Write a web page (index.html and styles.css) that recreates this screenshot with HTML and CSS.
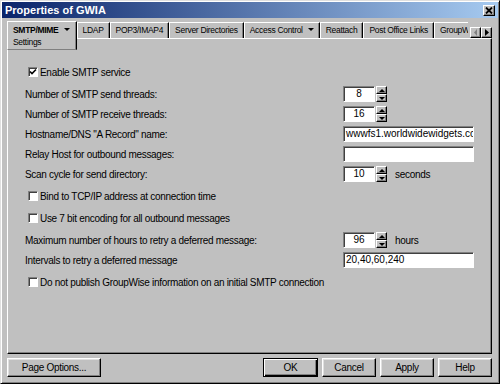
FILE: index.html
```html
<!DOCTYPE html>
<html lang="en">
<head>
    <meta charset="UTF-8">
    <title>Properties of GWIA</title>
    <link rel="stylesheet" href="styles.css">
</head>
<body>
    <div class="window">
        <div class="titlebar">
            <span class="title">Properties of GWIA</span>
            <span class="close-btn">
                <svg width="8" height="7" viewBox="0 0 8 7"><path d="M1 0.5 L7 6.5 M7 0.5 L1 6.5" stroke="#000" stroke-width="1.8"/></svg>
            </span>
        </div>

        <div class="body">
            <div class="tab-strip">
                <div class="tabs">
                    <div class="tab active">
                        <div class="tab-main">SMTP/MIME <span class="caret"></span></div>
                        <div class="tab-sub">Settings</div>
                    </div>
                    <div class="tab">LDAP</div>
                    <div class="tab">POP3/IMAP4</div>
                    <div class="tab">Server Directories</div>
                    <div class="tab">Access Control <span class="caret"></span></div>
                    <div class="tab">Reattach</div>
                    <div class="tab">Post Office Links</div>
                    <div class="tab">GroupWise</div>
                </div>
                <div class="tab-scroll">
                    <span class="scroll-btn">
                        <svg width="4" height="7" viewBox="0 0 4 7"><path d="M3 0 L0 3.5 L3 7 Z" fill="#808080"/></svg>
                    </span>
                    <span class="scroll-btn">
                        <svg width="4" height="7" viewBox="0 0 4 7"><path d="M0 0 L4 3.5 L0 7 Z" fill="#000"/></svg>
                    </span>
                </div>
            </div>

            <div class="panel">
                <div class="row check">
                    <span class="checkbox">
                        <svg width="8" height="8" viewBox="0 0 8 8"><path d="M1 3.5 L3 5.5 L7 1.5" fill="none" stroke="#000" stroke-width="1.6"/></svg>
                    </span>
                    <span class="check-label">Enable SMTP service</span>
                </div>
                <div class="row">
                    <span class="label">Number of SMTP send threads:</span>
                    <span class="input spin">8</span>
                    <span class="spin-btns">
                        <span class="spin-btn"><span class="arrow-up"></span></span>
                        <span class="spin-btn"><span class="arrow-down"></span></span>
                    </span>
                </div>
                <div class="row">
                    <span class="label">Number of SMTP receive threads:</span>
                    <span class="input spin">16</span>
                    <span class="spin-btns">
                        <span class="spin-btn"><span class="arrow-up"></span></span>
                        <span class="spin-btn"><span class="arrow-down"></span></span>
                    </span>
                </div>
                <div class="row">
                    <span class="label">Hostname/DNS "A Record" name:</span>
                    <span class="input wide">wwwfs1.worldwidewidgets.com</span>
                </div>
                <div class="row">
                    <span class="label">Relay Host for outbound messages:</span>
                    <span class="input wide"></span>
                </div>
                <div class="row">
                    <span class="label">Scan cycle for send directory:</span>
                    <span class="input spin">10</span>
                    <span class="spin-btns">
                        <span class="spin-btn"><span class="arrow-up"></span></span>
                        <span class="spin-btn"><span class="arrow-down"></span></span>
                    </span>
                    <span class="unit">seconds</span>
                </div>
                <div class="row check">
                    <span class="checkbox"></span>
                    <span class="check-label">Bind to TCP/IP address at connection time</span>
                </div>
                <div class="row check">
                    <span class="checkbox"></span>
                    <span class="check-label">Use 7 bit encoding for all outbound messages</span>
                </div>
                <div class="row">
                    <span class="label">Maximum number of hours to retry a deferred message:</span>
                    <span class="input spin">96</span>
                    <span class="spin-btns">
                        <span class="spin-btn"><span class="arrow-up"></span></span>
                        <span class="spin-btn"><span class="arrow-down"></span></span>
                    </span>
                    <span class="unit">hours</span>
                </div>
                <div class="row">
                    <span class="label">Intervals to retry a deferred message</span>
                    <span class="input wide">20,40,60,240</span>
                </div>
                <div class="row check">
                    <span class="checkbox"></span>
                    <span class="check-label">Do not publish GroupWise information on an initial SMTP connection</span>
                </div>
            </div>

            <div class="footer">
                <button class="btn page-options">Page Options...</button>
                <div class="btn-group">
                    <button class="btn default">OK</button>
                    <button class="btn">Cancel</button>
                    <button class="btn">Apply</button>
                    <button class="btn">Help</button>
                </div>
            </div>
        </div>
    </div>
</body>
</html>
```

FILE: styles.css
```css
/* Reset */
* {
    margin: 0;
    padding: 0;
    box-sizing: border-box;
}

body {
    font-family: 'Liberation Sans', Arial, sans-serif;
    font-size: 10px;
    letter-spacing: -0.3px;
    color: #000;
    background-color: #c0c0c0;
}

/* Window frame */
.window {
    width: 500px;
    height: 384px;
    background-color: #c0c0c0;
    border: 1px solid;
    border-color: #dfdfdf #000 #000 #dfdfdf;
    box-shadow: inset 1px 1px #fff, inset -1px -1px #808080;
    padding: 1px;
    display: flex;
    flex-direction: column;
}

.titlebar {
    height: 16px;
    flex: none;
    background: linear-gradient(to right, #0a246a, #a6caf0);
    display: flex;
    align-items: center;
    justify-content: space-between;
    padding: 0 3px;
}

.title {
    color: #fff;
    font-weight: bold;
    font-size: 11px;
    letter-spacing: 0;
}

.close-btn {
    width: 12px;
    height: 11px;
    background-color: #c0c0c0;
    border: 1px solid;
    border-color: #fff #000 #000 #fff;
    box-shadow: inset -1px -1px #808080;
    display: flex;
    align-items: center;
    justify-content: center;
}

.body {
    flex: 1;
    display: flex;
    flex-direction: column;
    padding: 3px 6px 0 5px;
}

/* Tabs */
.tab-strip {
    height: 17px;
    flex: none;
    display: flex;
    align-items: flex-start;
}

.tabs {
    width: 461px;
    display: flex;
    align-items: flex-start;
    overflow-x: clip;
    overflow-y: visible;
}

.tab {
    flex: none;
    height: 16px;
    margin-top: 1px;
    padding: 0 5px;
    border-left: 1px solid #fff;
    border-top: 1px solid #fff;
    border-right: 1px solid #000;
    box-shadow: inset -1px 0 #808080;
    font-size: 8.5px;
    letter-spacing: -0.3px;
    line-height: 14px;
    white-space: nowrap;
}

.tab.active {
    position: relative;
    z-index: 1;
    height: 29px;
    margin-top: 0;
    padding: 2px 6px 0 5px;
    background-color: #c0c0c0;
    border-bottom: 1px solid #808080;
    line-height: 12px;
}

.tab-main {
    font-weight: bold;
}

.caret {
    display: inline-block;
    margin-left: 3px;
    vertical-align: 2px;
    border-left: 3px solid transparent;
    border-right: 3px solid transparent;
    border-top: 3px solid #000;
}

.tab-scroll {
    display: flex;
    margin-left: 2px;
    margin-top: 6px;
}

.scroll-btn {
    width: 11px;
    height: 11px;
    background-color: #c0c0c0;
    border: 1px solid;
    border-color: #fff #000 #000 #fff;
    box-shadow: inset -1px -1px #808080;
    display: flex;
    align-items: center;
    justify-content: center;
}

/* Panel */
.panel {
    height: 316px;
    flex: none;
    border: 1px solid;
    border-color: #fff #000 #000 #fff;
    box-shadow: inset -1px -1px #808080;
    padding: 21px 0 0 17px;
}

.row {
    height: 20px;
    display: flex;
    align-items: center;
    white-space: nowrap;
}

.row.check {
    margin: 2px 0;
}

.label {
    width: 318px;
    flex: none;
}

.checkbox {
    width: 10px;
    height: 10px;
    margin-left: 3px;
    background-color: #fff;
    border: 1px solid;
    border-color: #808080 #fff #fff #808080;
    box-shadow: inset 1px 1px #404040;
    display: flex;
    align-items: center;
    justify-content: center;
}

.check-label {
    margin-left: 2px;
}

.input {
    height: 16px;
    background-color: #fff;
    border: 1px solid;
    border-color: #808080 #fff #fff #808080;
    box-shadow: inset 1px 1px #404040;
    padding: 0 2px;
    line-height: 14px;
    letter-spacing: 0;
    overflow: hidden;
}

.input.spin {
    width: 32px;
    text-align: center;
}

.input.wide {
    width: 131px;
}

.spin-btns {
    width: 11px;
    height: 16px;
    margin-left: 1px;
    display: flex;
    flex-direction: column;
}

.spin-btn {
    height: 8px;
    background-color: #c0c0c0;
    border: 1px solid;
    border-color: #fff #000 #000 #fff;
    box-shadow: inset -1px -1px #808080;
    display: flex;
    align-items: center;
    justify-content: center;
}

.arrow-up {
    border-left: 3px solid transparent;
    border-right: 3px solid transparent;
    border-bottom: 3px solid #000;
}

.arrow-down {
    border-left: 3px solid transparent;
    border-right: 3px solid transparent;
    border-top: 3px solid #000;
}

.unit {
    margin-left: 8px;
}

/* Footer buttons */
.footer {
    display: flex;
    justify-content: space-between;
    padding-top: 4px;
}

.btn-group {
    display: flex;
    gap: 4px;
}

.btn {
    height: 19px;
    width: 54px;
    background-color: #c0c0c0;
    border: 1px solid;
    border-color: #fff #000 #000 #fff;
    box-shadow: inset -1px -1px #808080, inset 1px 1px #dfdfdf;
    font-family: inherit;
    font-size: 10px;
    letter-spacing: -0.3px;
    color: #000;
}

.btn.page-options {
    width: 94px;
}

.btn.default {
    width: 55px;
    border-color: #000;
    box-shadow: inset 1px 1px #fff, inset -1px -1px #000, inset -2px -2px #808080;
}
```
